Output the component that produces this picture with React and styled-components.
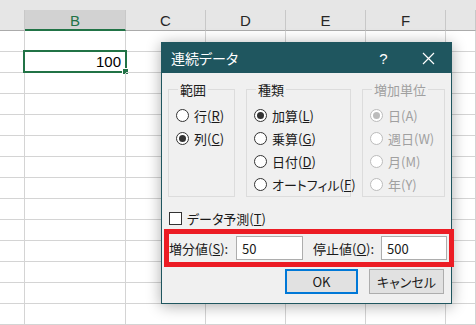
import React from 'react';
import styled, { createGlobalStyle } from 'styled-components';

const GlobalStyle = createGlobalStyle`
  html, body {
    margin: 0;
    padding: 0;
    background: #ffffff;
    overflow: hidden;
  }
  * {
    box-sizing: border-box;
  }
`;

const COLS = '25px 101px 80px 80px 80px 80px 1fr';

const Sheet = styled.div`
  position: relative;
  width: 476px;
  height: 325px;
  overflow: hidden;
  background: #ffffff;
  font-family: 'Liberation Sans', Arial, sans-serif;
`;

const TopBand = styled.div`
  height: 10px;
  background: #e6e6e6;
`;

const HeaderRow = styled.div`
  display: grid;
  grid-template-columns: ${COLS};
  height: 21px;
  background: #e6e6e6;
`;

const HeaderCell = styled.div`
  display: flex;
  align-items: center;
  justify-content: center;
  font-size: 15px;
  color: ${(p) => (p.$active ? '#217346' : '#262626')};
  background: ${(p) => (p.$active ? '#d2d2d2' : '#e6e6e6')};
  border-right: 1px solid #c8c8c8;
  border-bottom: ${(p) => (p.$active ? '2px solid #217346' : '1px solid #ababab')};
  padding-top: ${(p) => (p.$active ? '1px' : '0')};
`;

const Row = styled.div`
  display: grid;
  grid-template-columns: ${COLS};
  height: 21px;
`;

const Cell = styled.div`
  position: relative;
  border-right: 1px solid #d4d4d4;
  border-bottom: 1px solid #d4d4d4;
  font-size: 15px;
  color: #000;
  text-align: right;
  padding-right: 4px;
  line-height: 20px;
`;

const Selection = styled.div`
  position: absolute;
  top: -2px;
  left: -2px;
  right: -2px;
  bottom: -1px;
  border: 2px solid #217346;
  pointer-events: none;

  &::after {
    content: '';
    position: absolute;
    right: -4px;
    bottom: -4px;
    width: 5px;
    height: 5px;
    background: #217346;
    border: 1px solid #ffffff;
  }
`;

const Dialog = styled.div`
  position: absolute;
  left: 161px;
  top: 42px;
  width: 291px;
  height: 262px;
  background: #f0f0f0;
  border: 1px solid #1f565f;
  box-shadow: 0 2px 14px rgba(0, 0, 0, 0.33);
  font-family: 'Noto Sans CJK JP', 'Noto Sans', sans-serif;
  font-feature-settings: 'palt';
  font-size: 13px;
  color: #1a1a1a;
`;

const TitleBar = styled.div`
  height: 30px;
  background: #1f565f;
  color: #ffffff;
  display: flex;
  align-items: center;
  padding-left: 9px;
  font-size: 14px;
`;

const TitleText = styled.span`
  flex: 1;
`;

const TitleButton = styled.span`
  width: 45px;
  height: 30px;
  display: flex;
  align-items: center;
  justify-content: center;
  font-size: 15px;
  font-family: 'Liberation Sans', Arial, sans-serif;
`;

const Body = styled.div`
  padding: 0 0 0 6px;
`;

const Groups = styled.div`
  display: flex;
  gap: 11px;
  margin-top: 9px;
`;

const Group = styled.fieldset`
  margin: 0;
  min-width: 0;
  width: ${(p) => p.$w}px;
  flex: none;
  height: 115px;
  border: 1px solid #dcdcdc;
  padding: 9px 0 0 7px;
  display: flex;
  flex-direction: column;
  gap: 5px;
`;

const Legend = styled.legend`
  padding: 0 2px;
  margin-left: 2px;
  font-size: 13px;
  line-height: 15px;
  color: ${(p) => (p.$disabled ? '#a0a0a0' : '#1a1a1a')};
`;

const Option = styled.label`
  display: flex;
  align-items: center;
  gap: 5px;
  height: 18px;
  white-space: nowrap;
  color: ${(p) => (p.$disabled ? '#a0a0a0' : '#1a1a1a')};
`;

const Radio = styled.span`
  position: relative;
  width: 13px;
  height: 13px;
  border-radius: 50%;
  border: 1px solid ${(p) => (p.$disabled ? '#bcbcbc' : '#333333')};
  background: #ffffff;
  flex-shrink: 0;

  &::after {
    content: '';
    display: ${(p) => (p.$checked ? 'block' : 'none')};
    position: absolute;
    left: 2px;
    top: 2px;
    width: 7px;
    height: 7px;
    border-radius: 50%;
    background: ${(p) => (p.$disabled ? '#bcbcbc' : '#333333')};
  }
`;

const CheckRow = styled.label`
  display: flex;
  align-items: center;
  gap: 5px;
  margin: 14px 0 0 1px;
  height: 14px;
`;

const Checkbox = styled.span`
  width: 13px;
  height: 13px;
  border: 1px solid #333333;
  background: #ffffff;
`;

const ValueRow = styled.div`
  display: flex;
  align-items: center;
  margin: 4px -3px 0 -4px;
  height: 38px;
  border: 5px solid #ec1c24;
  padding-left: 0;
`;

const FieldLabel = styled.span`
  width: ${(p) => p.$w}px;
  margin-left: ${(p) => p.$ml || 0}px;
  white-space: nowrap;
`;

const Input = styled.div`
  width: ${(p) => p.$w}px;
  height: 24px;
  border: 1px solid #adadad;
  background: #ffffff;
  display: flex;
  align-items: center;
  padding-left: 5px;
  font-size: 13px;
`;

const Buttons = styled.div`
  display: flex;
  justify-content: flex-end;
  gap: 11px;
  margin: 2px 7px 0 0;
`;

const Button = styled.div`
  width: ${(p) => p.$w}px;
  height: 25px;
  display: flex;
  align-items: center;
  justify-content: center;
  background: #e1e1e1;
  border: ${(p) => (p.$primary ? '2px solid #0078d7' : '1px solid #adadad')};
  font-size: 13px;
`;

const Key = ({ children }) => <u>{children}</u>;

const RadioOption = ({ label, k, checked, disabled }) => (
  <Option $disabled={disabled}>
    <Radio $checked={checked} $disabled={disabled} />
    <span>
      {label}(
      {disabled ? k : <Key>{k}</Key>})
    </span>
  </Option>
);

const CloseIcon = () => (
  <svg width="13" height="13" viewBox="0 0 13 13">
    <path d="M1 1 L12 12 M12 1 L1 12" stroke="#ffffff" strokeWidth="1.2" fill="none" />
  </svg>
);

const App = () => {
  const cols = ['B', 'C', 'D', 'E', 'F'];
  const rows = Array.from({ length: 14 }, (_, i) => i);

  return (
    <>
      <GlobalStyle />
      <Sheet>
        <TopBand />
        <HeaderRow>
          <HeaderCell />
          {cols.map((c) => (
            <HeaderCell key={c} $active={c === 'B'}>
              {c}
            </HeaderCell>
          ))}
          <HeaderCell />
        </HeaderRow>
        {rows.map((r) => (
          <Row key={r}>
            <Cell />
            <Cell>
              {r === 1 && '100'}
              {r === 1 && <Selection />}
            </Cell>
            <Cell />
            <Cell />
            <Cell />
            <Cell />
            <Cell />
          </Row>
        ))}

        <Dialog>
          <TitleBar>
            <TitleText>連続データ</TitleText>
            <TitleButton>?</TitleButton>
            <TitleButton>
              <CloseIcon />
            </TitleButton>
          </TitleBar>
          <Body>
            <Groups>
              <Group $w={67}>
                <Legend>範囲</Legend>
                <RadioOption label="行" k="R" />
                <RadioOption label="列" k="C" checked />
              </Group>
              <Group $w={105}>
                <Legend>種類</Legend>
                <RadioOption label="加算" k="L" checked />
                <RadioOption label="乗算" k="G" />
                <RadioOption label="日付" k="D" />
                <RadioOption label="オートフィル" k="F" />
              </Group>
              <Group $w={83}>
                <Legend $disabled>増加単位</Legend>
                <RadioOption label="日" k="A" checked disabled />
                <RadioOption label="週日" k="W" disabled />
                <RadioOption label="月" k="M" disabled />
                <RadioOption label="年" k="Y" disabled />
              </Group>
            </Groups>
            <CheckRow>
              <Checkbox />
              <span>
                データ予測(<Key>T</Key>)
              </span>
            </CheckRow>
            <ValueRow>
              <FieldLabel $w={67}>
                増分値(<Key>S</Key>):
              </FieldLabel>
              <Input $w={67}>50</Input>
              <FieldLabel $w={68} $ml={10}>
                停止値(<Key>O</Key>):
              </FieldLabel>
              <Input $w={66}>500</Input>
            </ValueRow>
            <Buttons>
              <Button $w={73} $primary>
                OK
              </Button>
              <Button $w={75}>キャンセル</Button>
            </Buttons>
          </Body>
        </Dialog>
      </Sheet>
    </>
  );
};

export default App;
